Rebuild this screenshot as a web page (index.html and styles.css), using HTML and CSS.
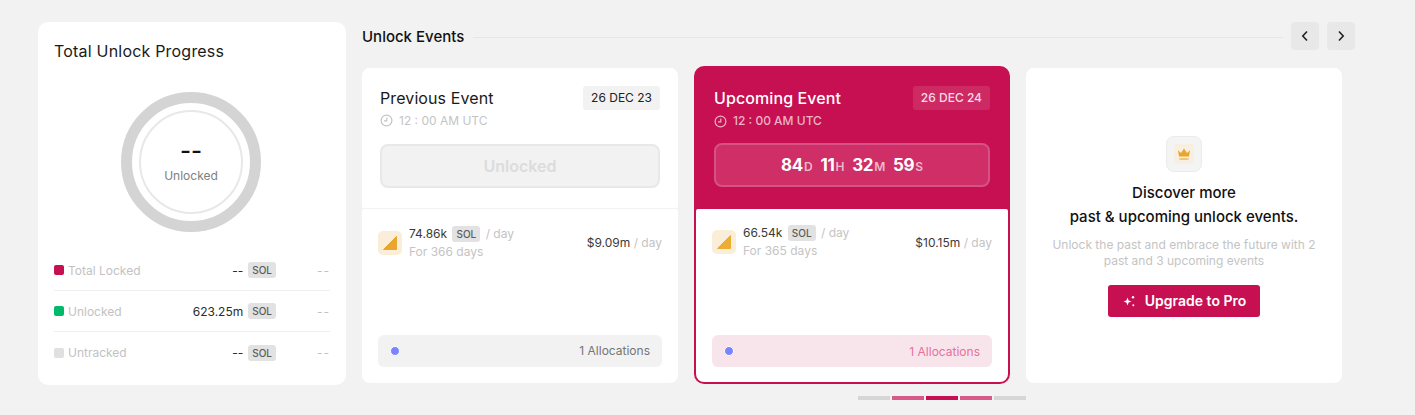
FILE: index.html
```html
<!DOCTYPE html>
<html lang="en">
<head>
  <meta charset="UTF-8">
  <title>Unlock Events</title>
  <link rel="stylesheet" href="styles.css">
</head>
<body>

  <div class="page">
    <section class="progress-card">
      <h2 class="progress-title">Total Unlock Progress</h2>
      <div class="ring">
        <div class="ring-inner">
          <span class="ring-value">--</span>
          <span class="ring-label">Unlocked</span>
        </div>
      </div>
      <div class="legend">
        <div class="legend-row">
          <span class="swatch swatch-locked"></span>
          <span class="legend-name">Total Locked</span>
          <span class="legend-value">--</span>
          <span class="tag">SOL</span>
          <span class="legend-usd">--</span>
        </div>
        <div class="legend-row">
          <span class="swatch swatch-unlocked"></span>
          <span class="legend-name">Unlocked</span>
          <span class="legend-value">623.25m</span>
          <span class="tag">SOL</span>
          <span class="legend-usd">--</span>
        </div>
        <div class="legend-row">
          <span class="swatch swatch-untracked"></span>
          <span class="legend-name">Untracked</span>
          <span class="legend-value">--</span>
          <span class="tag">SOL</span>
          <span class="legend-usd">--</span>
        </div>
      </div>
    </section>

    <section class="events">
      <div class="events-header">
        <h2 class="events-title">Unlock Events</h2>
        <div class="events-line"></div>
        <button class="nav-btn">
          <svg width="10" height="12" viewBox="0 0 10 12"><path d="M7 1.5 2.8 6 7 10.5" fill="none" stroke="#222" stroke-width="1.6"/></svg>
        </button>
        <button class="nav-btn">
          <svg width="10" height="12" viewBox="0 0 10 12"><path d="M3 1.5 7.2 6 3 10.5" fill="none" stroke="#222" stroke-width="1.6"/></svg>
        </button>
      </div>

      <div class="event-list">
        <article class="event">
          <div class="event-top">
            <div class="event-head">
              <div>
                <h3 class="event-name">Previous Event</h3>
                <div class="event-time">
                  <svg width="13" height="13" viewBox="0 0 13 13"><circle cx="6.5" cy="6.5" r="5.4" fill="none" stroke="currentColor" stroke-width="1.2"/><path d="M6.8 3.4v3.4H4" fill="none" stroke="currentColor" stroke-width="1.2"/></svg>
                  12 : 00 AM UTC
                </div>
              </div>
              <span class="event-date">26 DEC 23</span>
            </div>
            <div class="status">Unlocked</div>
          </div>
          <div class="event-body">
            <div class="amount">
              <span class="token-icon"><svg width="14" height="14" viewBox="0 0 14 14"><path d="M13.5 0.5V13.5H0.5Z" fill="#e8a62e" stroke="#e8a62e" stroke-linejoin="round"/></svg></span>
              <div class="amount-text">
                <div class="amount-line">74.86k <span class="tag">SOL</span> <span class="muted">/ day</span></div>
                <div class="muted">For 366 days</div>
              </div>
              <div class="amount-usd">$9.09m <span class="muted">/ day</span></div>
            </div>
            <div class="alloc">
              <span class="alloc-dot"></span>
              <span>1 Allocations</span>
            </div>
          </div>
        </article>

        <article class="event event-active">
          <div class="event-top">
            <div class="event-head">
              <div>
                <h3 class="event-name">Upcoming Event</h3>
                <div class="event-time">
                  <svg width="13" height="13" viewBox="0 0 13 13"><circle cx="6.5" cy="6.5" r="5.4" fill="none" stroke="currentColor" stroke-width="1.2"/><path d="M6.8 3.4v3.4H4" fill="none" stroke="currentColor" stroke-width="1.2"/></svg>
                  12 : 00 AM UTC
                </div>
              </div>
              <span class="event-date">26 DEC 24</span>
            </div>
            <div class="status">
              <span class="count">84<small>D</small></span>
              <span class="count">11<small>H</small></span>
              <span class="count">32<small>M</small></span>
              <span class="count">59<small>S</small></span>
            </div>
          </div>
          <div class="event-body">
            <div class="amount">
              <span class="token-icon"><svg width="14" height="14" viewBox="0 0 14 14"><path d="M13.5 0.5V13.5H0.5Z" fill="#edad33" stroke="#edad33" stroke-linejoin="round"/></svg></span>
              <div class="amount-text">
                <div class="amount-line">66.54k <span class="tag">SOL</span> <span class="muted">/ day</span></div>
                <div class="muted">For 365 days</div>
              </div>
              <div class="amount-usd">$10.15m <span class="muted">/ day</span></div>
            </div>
            <div class="alloc">
              <span class="alloc-dot"></span>
              <span>1 Allocations</span>
            </div>
          </div>
        </article>

        <article class="promo">
          <div class="promo-icon">
            <span class="crown">
              <svg width="14" height="14" viewBox="0 0 14 14"><path d="M1 3.2 4 6 7 1.6 10 6 13 3.2 12 9.6H2Z" fill="#e8a62e"/><path d="M2.4 12h9.2" stroke="#e8a62e" stroke-width="1.1"/></svg>
            </span>
          </div>
          <h3 class="promo-title">Discover more<br>past &amp; upcoming unlock events.</h3>
          <p class="promo-text">Unlock the past and embrace the future with 2 past and 3 upcoming events</p>
          <button class="upgrade">
            <svg width="14" height="14" viewBox="0 0 14 14" fill="#fff"><path d="M5.5 3.5 6.6 6.4 9.5 7.5 6.6 8.6 5.5 11.5 4.4 8.6 1.5 7.5 4.4 6.4Z"/><circle cx="11" cy="3.2" r="1.2"/><circle cx="11.3" cy="11.2" r="1"/></svg>
            Upgrade to Pro
          </button>
        </article>
      </div>

      <div class="pager">
        <span class="pager-bar"></span>
        <span class="pager-bar pager-near"></span>
        <span class="pager-bar pager-current"></span>
        <span class="pager-bar pager-near"></span>
        <span class="pager-bar"></span>
      </div>
    </section>
  </div>

</body>
</html>
```

FILE: styles.css
```css
* {
  box-sizing: border-box;
}

body {
  margin: 0;
  height: 415px;
  overflow: hidden;
  background: #f2f2f2;
  font-family: Inter, "Liberation Sans", sans-serif;
  color: #1a1a1a;
}

h2, h3, p {
  margin: 0;
  font-weight: 500;
}

.page {
  display: flex;
  align-items: flex-start;
  gap: 16px;
  padding: 22px 0 0 38px;
}

/* left card */
.progress-card {
  width: 308px;
  height: 363px;
  padding: 20px 16px 0;
  background: #fff;
  border-radius: 10px;
}

.progress-title {
  font-size: 16px;
  line-height: 18px;
  font-weight: 400;
  letter-spacing: 0.2px;
}

.ring {
  width: 140px;
  height: 140px;
  margin: 32px auto 0 auto;
  padding: 7px;
  position: relative;
  left: -1px;
  border: 11px solid #d4d4d4;
  border-radius: 50%;
}

.ring-inner {
  height: 100%;
  display: flex;
  flex-direction: column;
  align-items: center;
  border: 2px solid #e8e8e8;
  border-radius: 50%;
}

.ring-value {
  margin-top: 25px;
  font-size: 24px;
  line-height: 28px;
  font-weight: 500;
  color: #111;
}

.ring-label {
  margin-top: 3px;
  font-size: 12px;
  line-height: 16px;
  color: #808080;
}

.legend {
  margin-top: 18px;
}

.legend-row {
  display: flex;
  align-items: center;
  height: 41px;
  font-size: 12px;
  border-bottom: 1px solid #f0f0f0;
}

.legend-row:last-child {
  border-bottom: none;
}

.swatch {
  width: 10px;
  height: 10px;
  margin-right: 4px;
  border-radius: 2px;
}

.swatch-locked {
  background: #c71051;
}

.swatch-unlocked {
  background: #00b96b;
}

.swatch-untracked {
  background: #e0e0e0;
}

.legend-name {
  color: #c2c2c2;
}

.legend-value {
  margin-left: auto;
  margin-right: 5px;
  color: #2b2b2b;
}

.legend-usd {
  width: 54px;
  text-align: right;
  color: #c2c2c2;
  letter-spacing: 1px;
}

.tag {
  display: inline-block;
  padding: 0 4px;
  height: 16px;
  line-height: 17px;
  font-size: 10px;
  font-weight: 500;
  color: #5c5c5c;
  background: #e2e2e2;
  border-radius: 3px;
}

/* events */
.events {
  width: 993px;
}

.events-header {
  display: flex;
  align-items: center;
  height: 28px;
}

.events-title {
  font-size: 15px;
  font-weight: 500;
  color: #111;
  white-space: nowrap;
}

.events-line {
  flex: 1;
  height: 1px;
  margin: 2px 8px 0 9px;
  background: #e6e6e6;
}

.nav-btn {
  display: flex;
  align-items: center;
  justify-content: center;
  width: 28px;
  height: 28px;
  margin-left: 8px;
  padding: 0;
  border: none;
  border-radius: 4px;
  background: #e8e8e8;
}

.nav-btn:first-of-type {
  margin-left: 0;
}

.event-list {
  display: flex;
  align-items: center;
  gap: 16px;
  margin-top: 16px;
  width: 980px;
}

.event {
  width: 316px;
  height: 315px;
  flex: none;
  display: flex;
  flex-direction: column;
  gap: 1px;
  background: #f2f2f2;
  border-radius: 8px;
}

.event-top {
  height: 140px;
  padding: 18px 18px 0;
  background: #fff;
  border-radius: 8px 8px 2px 2px;
}

.event-head {
  display: flex;
  justify-content: space-between;
  align-items: flex-start;
}

.event-name {
  margin-top: 3px;
  font-size: 16px;
  line-height: 19px;
  font-weight: 400;
  letter-spacing: 0.1px;
}

.event-time {
  display: flex;
  align-items: center;
  gap: 6px;
  margin-top: 5px;
  font-size: 12px;
  line-height: 16px;
  color: #c4c4c4;
}

.event-date {
  padding: 0 8px;
  height: 24px;
  line-height: 24px;
  font-size: 12px;
  color: #222;
  background: #f2f2f2;
  border-radius: 3px;
}

.status {
  display: flex;
  justify-content: center;
  align-items: center;
  gap: 8px;
  height: 44px;
  margin-top: 15px;
  font-size: 16px;
  font-weight: 600;
  color: #dcdcdc;
  background: #f2f2f2;
  border: 2px solid #e8e8e8;
  border-radius: 8px;
}

.event-body {
  flex: 1;
  display: flex;
  flex-direction: column;
  justify-content: space-between;
  padding: 16px 16px 16px;
  background: #fff;
  border-radius: 2px 2px 8px 8px;
}

.amount {
  display: flex;
  align-items: center;
  font-size: 12px;
}

.token-icon {
  display: flex;
  align-items: center;
  justify-content: center;
  width: 24px;
  height: 24px;
  margin-right: 7px;
  background: #fbeed8;
  border-radius: 5px;
}

.amount-text {
  line-height: 18px;
}

.amount-line {
  color: #3a3a3a;
}

.amount-line .tag {
  margin: 0 2px;
}

.amount-usd {
  margin-left: auto;
  color: #3a3a3a;
}

.muted {
  color: #c4c4c4;
}

.alloc {
  display: flex;
  justify-content: space-between;
  align-items: center;
  height: 32px;
  padding: 0 12px;
  font-size: 12px;
  color: #757575;
  background: #f2f2f2;
  border-radius: 6px;
}

.alloc-dot {
  width: 10px;
  height: 10px;
  background: #7b84ff;
  border: 1px solid #fff;
  border-radius: 50%;
}

/* active one is a bit taller, crimson frame round the body */
.event-active {
  height: 318px;
  gap: 0;
  background: #c71051;
  border-radius: 10px;
  padding: 0 2px 2px;
}

.event-active .event-top {
  height: 143px;
  padding: 20px 18px 0 18px;
  background: none;
}

.event-active .event-name {
  color: #fff;
  font-weight: 500;
}

.event-active .event-time {
  color: #ecb3c8;
  font-weight: 500;
}

.event-active .event-date {
  color: #f9dce6;
  font-weight: 500;
  background: #cd2a64;
}

.event-active .status {
  height: 44px;
  margin-top: 14px;
  color: #fff;
  background: #cf2e67;
  border: 2px solid #d65285;
}

.count {
  font-size: 17px;
  font-weight: 700;
  letter-spacing: -0.3px;
}

.count small {
  margin-left: 1px;
  font-size: 12px;
  font-weight: 600;
  color: #eeb8cb;
}

.event-active .event-body {
  padding: 15px 16px 15px;
  border-radius: 2px 2px 8px 8px;
}

.event-active .alloc {
  color: #e8709b;
  background: #f8e5ec;
}

/* promo */
.promo {
  width: 316px;
  height: 315px;
  flex: none;
  display: flex;
  flex-direction: column;
  align-items: center;
  padding: 68px 16px 0;
  text-align: center;
  background: #fff;
  border-radius: 8px;
}

.promo-icon {
  display: flex;
  align-items: center;
  justify-content: center;
  width: 36px;
  height: 36px;
  background: #f4f4f4;
  border: 1px solid #ebebeb;
  border-radius: 8px;
}

.crown {
  display: flex;
  align-items: center;
  justify-content: center;
  width: 20px;
  height: 20px;
  background: #f7efe0;
  border-radius: 3px;
}

.promo-title {
  margin-top: 9px;
  font-size: 15px;
  line-height: 24px;
  color: #111;
}

.promo-text {
  margin-top: 8px;
  font-size: 12px;
  line-height: 16px;
  font-weight: 400;
  color: #c4c4c4;
}

.upgrade {
  display: flex;
  align-items: center;
  gap: 9px;
  height: 32px;
  margin-top: 16px;
  padding: 0 14px;
  border: none;
  border-radius: 3px;
  font-family: inherit;
  font-size: 14px;
  font-weight: 600;
  color: #fff;
  background: #c71051;
}

.pager {
  display: flex;
  justify-content: center;
  gap: 2px;
  margin-top: 12px;
  width: 1160px;
}

.pager-bar {
  width: 32px;
  height: 4px;
  background: #d6d6d6;
}

.pager-near {
  background: #d85a89;
}

.pager-current {
  background: #c71051;
}
```
